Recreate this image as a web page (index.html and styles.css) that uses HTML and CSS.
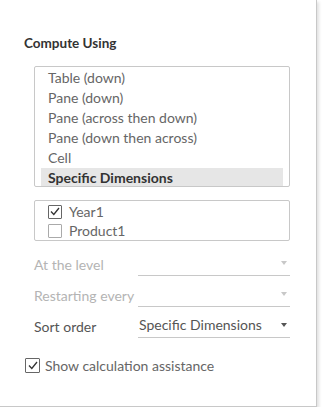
FILE: index.html
```html
<!DOCTYPE html>
<html>

<head>
    <title>Table Calculation</title>
    <link rel="stylesheet" href="styles.css">
</head>

<body>
    <div class="panel">
        <div class="section-title">Compute Using</div>

        <ul class="listbox">
            <li>Table (down)</li>
            <li>Pane (down)</li>
            <li>Pane (across then down)</li>
            <li>Pane (down then across)</li>
            <li>Cell</li>
            <li class="selected">Specific Dimensions</li>
        </ul>

        <div class="checklist">
            <label class="check-row">
                <span class="box checked">
                    <svg width="10" height="9" viewBox="0 0 10 9"><path d="M1 4.5 L3.8 7.5 L9 1" fill="none" stroke="#333" stroke-width="1.3"/></svg>
                </span>
                Year1
            </label>
            <label class="check-row">
                <span class="box"></span>
                Product1
            </label>
        </div>

        <div class="fields">
            <div class="field disabled">
                <span class="field-label">At the level</span>
                <div class="dropdown"><span class="value"></span><span class="arrow"></span></div>
            </div>
            <div class="field disabled">
                <span class="field-label">Restarting every</span>
                <div class="dropdown"><span class="value"></span><span class="arrow"></span></div>
            </div>
            <div class="field">
                <span class="field-label">Sort order</span>
                <div class="dropdown"><span class="value">Specific Dimensions</span><span class="arrow"></span></div>
            </div>
        </div>

        <label class="assist">
            <span class="box checked">
                <svg width="10" height="9" viewBox="0 0 10 9"><path d="M1 4.5 L3.8 7.5 L9 1" fill="none" stroke="#333" stroke-width="1.3"/></svg>
            </span>
            Show calculation assistance
        </label>
    </div>
</body>
</html>
```

FILE: styles.css
```css
body {
    margin: 0;
    background-color: #ffffff;
    font-family: "Lato", "Liberation Sans", sans-serif;
    font-size: 14px;
    color: #555555;
}

.panel {
    width: 317px;
    height: 407px;
    box-sizing: border-box;
    border-right: 1px solid #c8c8c8;
    border-bottom: 1px solid #c8c8c8;
    box-shadow: 2px 2px 3px rgba(0, 0, 0, 0.12);
    padding: 35px 0 0 24px;
}

.section-title {
    font-weight: bold;
    color: #333333;
    font-size: 13.5px;
    height: 21px;
    line-height: 16px;
}

.listbox {
    list-style: none;
    margin: 10px 0 0 10px;
    padding: 1px 6px 0 6px;
    width: 256px;
    height: 121px;
    box-sizing: border-box;
    border: 1px solid #c8c8c8;
    border-radius: 2px;
    overflow: hidden;
}

.listbox li {
    height: 20px;
    line-height: 20px;
    padding-left: 7px;
    color: #666666;
}

.listbox li.selected {
    background-color: #e6e6e6;
    font-weight: bold;
    color: #333333;
}

.checklist {
    margin: 13px 0 0 10px;
    width: 256px;
    height: 41px;
    box-sizing: border-box;
    border: 1px solid #c8c8c8;
    border-radius: 2px;
    padding: 1px 0 0 13px;
}

.check-row {
    display: flex;
    align-items: center;
    height: 19px;
    color: #666666;
}

.box {
    width: 14px;
    height: 14px;
    box-sizing: border-box;
    border: 1px solid #aaaaaa;
    border-radius: 1px;
    margin-right: 7px;
    display: flex;
    align-items: center;
    justify-content: center;
}

.box.checked {
    border-color: #666666;
}

.fields {
    margin: 4px 0 0 10px;
}

.field {
    display: flex;
    align-items: flex-end;
    height: 31px;
}

.field-label {
    width: 104px;
    line-height: 20px;
    padding-bottom: 1px;
}

.field.disabled .field-label {
    color: #b4b4b4;
}

.dropdown {
    width: 152px;
    height: 24px;
    box-sizing: border-box;
    border-bottom: 1px solid #c8c8c8;
    display: flex;
    align-items: center;
    justify-content: space-between;
    padding: 0 3px 2px 1px;
    color: #555555;
}

.arrow {
    width: 0;
    height: 0;
    border-left: 3.5px solid transparent;
    border-right: 3.5px solid transparent;
    border-top: 4px solid #555555;
}

.field.disabled .arrow {
    border-top-color: #c8c8c8;
}

.assist {
    display: flex;
    align-items: center;
    margin-top: 19px;
    margin-left: 1px;
    height: 16px;
    color: #666666;
}

.assist .box {
    width: 15px;
    height: 15px;
    margin-right: 5px;
}
```
